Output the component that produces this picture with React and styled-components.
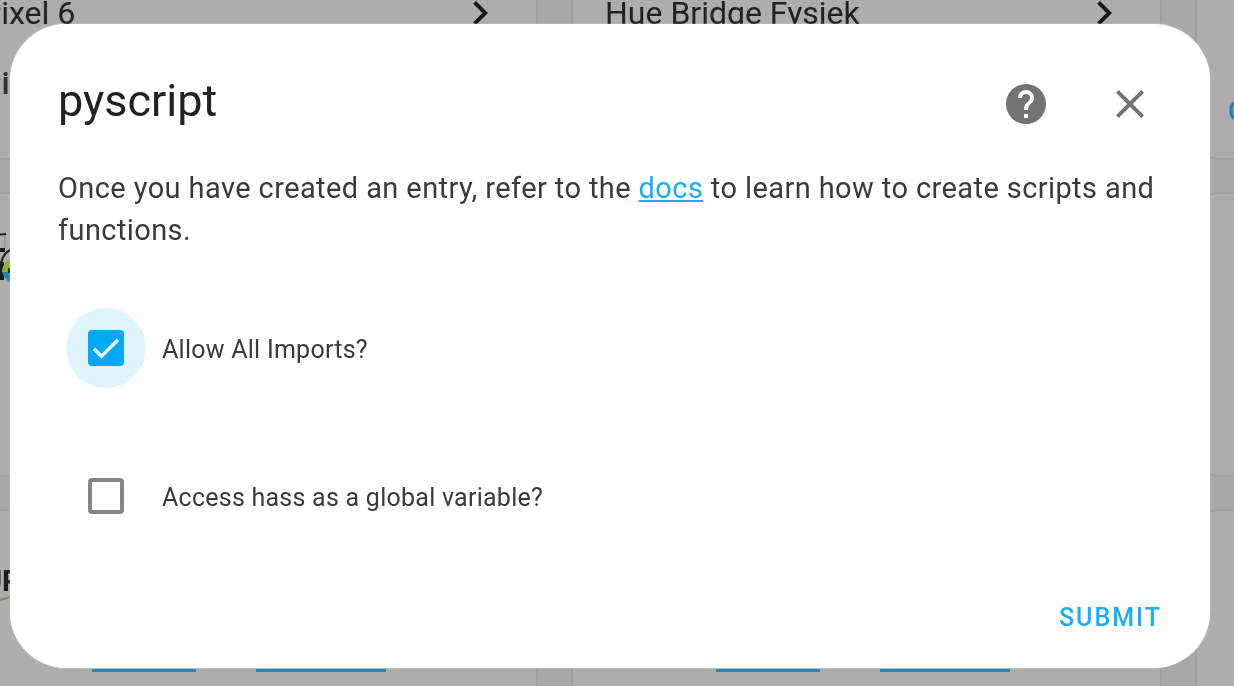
import React from "react";
import styled, { createGlobalStyle } from "styled-components";

const GlobalStyle = createGlobalStyle`
  * { box-sizing: border-box; }
  body {
    margin: 0;
    background: #a8a8a8;
    color: #212121;
    font-family: Roboto, "Liberation Sans", sans-serif;
  }
`;

const Page = styled.main`
  position: fixed;
  inset: 0;
  overflow: hidden;
`;

const CardGrid = styled.div`
  display: grid;
  grid-template-columns: repeat(3, 591px);
  grid-auto-rows: 285px;
  gap: 32px 33px;
  margin: -125px 0 0 -53px;
`;

const Card = styled.article`
  display: flex;
  flex-direction: column;
  align-items: flex-start;
  background: #adadad;
  border: 2px solid #a0a0a0;
  border-radius: 24px;
`;

const CardRow = styled.div`
  display: flex;
  align-items: center;
  justify-content: space-between;
  align-self: stretch;
  margin-top: 112px;
  padding: 0 32px;
  font-size: 32px;
  line-height: 36px;
`;

const CardTitle = styled.h2`
  margin: 28px 32px 0;
  color: #2b2f38;
  font-size: 32px;
  font-weight: 500;
  line-height: 36px;
`;

const CardLink = styled.a`
  margin: 216px 31px 0;
  color: #1a80ae;
  font-size: 26px;
  font-weight: 500;
  line-height: 36px;
  text-decoration: none;
`;

const CardLinks = styled.div`
  display: flex;
  gap: 60px;
  margin: auto 0 120px 143px;
`;

const LinkLine = styled.span`
  width: ${(p) => p.$width}px;
  height: 3px;
  background: #2a84ae;
`;

const CardLogo = styled.svg`
  flex: none;
  margin: ${(p) => p.$top}px 0 0 20px;
`;

const Overlay = styled.div`
  position: fixed;
  inset: 0;
  padding: 24px 24px 18px 10px;
`;

const Dialog = styled.section`
  background: #fff;
  border-radius: 56px;
  box-shadow: 0 0 2px rgba(255, 255, 255, 0.5);
`;

const Header = styled.header`
  display: flex;
  align-items: flex-start;
  padding: 32px 32px 0 48px;
`;

const Title = styled.h1`
  flex: 1;
  margin: 0;
  font-size: 45px;
  font-weight: 400;
  line-height: 90px;
`;

const IconButton = styled.button`
  display: grid;
  place-items: center;
  width: 96px;
  height: 96px;
  margin-left: 8px;
  padding: 0;
  border: 0;
  background: none;
  color: #737373;
`;

const Description = styled.p`
  margin: 15px 48px 0;
  font-size: 29px;
  line-height: 42px;
  letter-spacing: 0.014em;
  color: #3a3a3a;

  a {
    color: #18adf4;
    text-decoration: underline;
  }
`;

const Options = styled.div`
  display: flex;
  flex-direction: column;
  gap: 68px;
  padding: 57px 48px 0 56px;
`;

const Option = styled.label`
  display: flex;
  align-items: center;
  gap: 16px;
  font-size: 25px;
  line-height: 36px;
  letter-spacing: 0.01em;
  color: #3a3a3a;
`;

const OptionText = styled.span`
  padding-top: 4px;
`;

const CheckHalo = styled.span`
  display: grid;
  place-items: center;
  width: 80px;
  height: 80px;
  border-radius: 50%;
  background: ${(p) => (p.$active ? "#e0f4fe" : "transparent")};
`;

const Checkbox = styled.input`
  grid-area: 1 / 1;
  appearance: none;
  width: 36px;
  height: 36px;
  margin: 0;
  border: 4px solid #868686;
  border-radius: 4px;

  &:checked {
    border-color: #03a9f4;
    background: #03a9f4;
  }

  & + svg { visibility: hidden; }
  &:checked + svg { visibility: visible; }
`;

const CheckMark = styled.svg`
  grid-area: 1 / 1;
  z-index: 1;
  pointer-events: none;
`;

const Footer = styled.footer`
  display: flex;
  justify-content: flex-end;
  padding: 45px 32px 15px;
`;

const SubmitButton = styled.button`
  height: 72px;
  padding: 0 16px;
  border: 0;
  background: none;
  color: #18adf4;
  font-family: inherit;
  font-size: 25px;
  font-weight: 500;
  letter-spacing: 2px;
`;

const Chevron = () => (
  <svg width="48" height="48" viewBox="0 0 24 24" fill="#1a1a1a">
    <path d="M8.6 16.6 13.2 12 8.6 7.4 10 6l6 6-6 6z" />
  </svg>
);

function OptionField({ label, active, checked }) {
  return (
    <Option>
      <CheckHalo $active={active}>
        <Checkbox type="checkbox" defaultChecked={checked} />
        <CheckMark width="28" height="28" viewBox="0 0 24 24" fill="none" stroke="#e0f4fe" strokeWidth="3.1">
          <path d="M1.7 12.7 8.1 19.1 22.3 4.9" />
        </CheckMark>
      </CheckHalo>
      <OptionText>{label}</OptionText>
    </Option>
  );
}

function MusicLogo() {
  return (
    <CardLogo $top={31} width="64" height="70" viewBox="-31 225 64 70">
      <path d="M-12 239Q-4 234 6 234" fill="none" stroke="#1c1c1c" strokeWidth="2" />
      <path d="M5 235V248" stroke="#8a8a8a" strokeWidth="1" />
      <path d="M-10 248H5V252H-10zM-10 262H4V280H-10z" fill="#1c1c1c" />
      <path d="M1 263Q3 253 12 249" fill="none" stroke="#1c1c1c" strokeWidth="2" />
      <path d="M2 272A15 15 0 0 1 32 272z" fill="#86b43c" />
      <path d="M2 272A16 19 0 0 0 32 272z" fill="#2787b0" />
      <path d="M8 268H14V273H8z" fill="#1c1c1c" />
    </CardLogo>
  );
}

function UpLogo() {
  return (
    <CardLogo $top={50} width="64" height="45" viewBox="-31 562 64 45">
      <text x="-17" y="592" fontSize="29" fontWeight="700" fill="#1c1c1c">UP</text>
      <path d="M-20 601Q0 603 12 597" fill="none" stroke="#659a50" strokeWidth="2" />
    </CardLogo>
  );
}

const DeviceLinks = () => (
  <CardLinks>
    <LinkLine $width={104} />
    <LinkLine $width={130} />
  </CardLinks>
);

function DeviceCards() {
  return (
    <CardGrid>
      <Card>
        <CardRow>Pixel 6 <Chevron /></CardRow>
        <CardTitle>Pixel</CardTitle>
      </Card>
      <Card>
        <CardRow>Hue Bridge Fysiek <Chevron /></CardRow>
      </Card>
      <Card>
        <CardLink href="#c">C</CardLink>
      </Card>
      <Card><MusicLogo /></Card>
      <Card />
      <Card />
      <Card>
        <UpLogo />
        <DeviceLinks />
      </Card>
      <Card><DeviceLinks /></Card>
      <Card />
    </CardGrid>
  );
}

export default function App() {
  return (
    <>
      <GlobalStyle />
      <Page><DeviceCards /></Page>
      <Overlay>
        <Dialog role="dialog" aria-labelledby="dialog-title">
          <Header>
            <Title id="dialog-title">pyscript</Title>
            <IconButton aria-label="Help">
              <svg width="48" height="48" viewBox="0 0 24 24" fill="currentColor">
                <path d="M15.07 11.25l-.9.92C13.45 12.89 13 13.5 13 15h-2v-.5c0-1.11.45-2.11 1.17-2.83l1.24-1.26c.37-.36.59-.86.59-1.41a2 2 0 0 0-4 0H8a4 4 0 0 1 8 0c0 .88-.36 1.67-.93 2.25M13 19h-2v-2h2M12 2a10 10 0 1 0 0 20 10 10 0 0 0 0-20z" />
              </svg>
            </IconButton>
            <IconButton aria-label="Close">
              <svg width="48" height="48" viewBox="0 0 24 24" fill="currentColor">
                <path d="M19 6.41 17.59 5 12 10.59 6.41 5 5 6.41 10.59 12 5 17.59 6.41 19 12 13.41 17.59 19 19 17.59 13.41 12z" />
              </svg>
            </IconButton>
          </Header>
          <Description>
            Once you have created an entry, refer to the <a href="#docs">docs</a> to learn how to create scripts and functions.
          </Description>
          <Options>
            <OptionField label="Allow All Imports?" active checked />
            <OptionField label="Access hass as a global variable?" />
          </Options>
          <Footer><SubmitButton>SUBMIT</SubmitButton></Footer>
        </Dialog>
      </Overlay>
    </>
  );
}
